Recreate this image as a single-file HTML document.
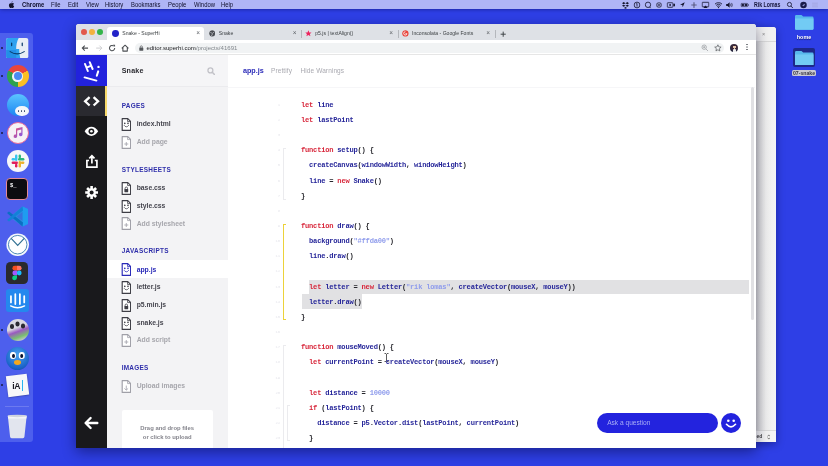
<!DOCTYPE html>
<html>
<head>
<meta charset="utf-8">
<title>Snake - SuperHi</title>
<style>
*{box-sizing:border-box;margin:0;padding:0}
html,body{width:828px;height:466px;overflow:hidden}
body{background:#2e3fe6;font-family:"Liberation Sans",sans-serif;position:relative;color:#222}
#root{position:absolute;left:0;top:0;width:828px;height:466px;will-change:transform}
.abs{position:absolute}
/* menubar */
#menubar{position:absolute;left:0;top:0;width:828px;height:9.200px;background:#afb5f6;box-shadow:0 0 4px rgba(0,0,60,.55);font-size:6.700px;line-height:10.500px;color:#0e0e2a;white-space:nowrap}
#menubar span{position:absolute;top:0;transform-origin:0 0;transform:scaleX(.88)}
#menubar b{font-weight:bold}
.mi{position:absolute;top:-.300px;height:10px;transform:scale(.900);transform-origin:50% 50%}
/* dock */
#dock{position:absolute;left:0;top:32.600px;width:32.900px;height:409px;background:#4d5fed;border-radius:0 3px 3px 0}
.di{position:absolute;left:7px;width:22px;height:22px;border-radius:50%}
.dot{position:absolute;left:1px;width:2px;height:2px;border-radius:50%;background:#1a1a40}
/* back window */
#backwin{position:absolute;left:700px;top:26.500px;width:75.900px;height:415.200px;background:#f3f3f3;border-radius:3px 3px 0 0;box-shadow:0 2px 9px rgba(0,0,40,.4);overflow:hidden}
#bwtab{position:absolute;left:0;top:0;width:76px;height:15px;background:#f1f1f1;border-bottom:1px solid #d8d8d8}
#bwx{position:absolute;left:62px;top:4.500px;font-size:5.500px;line-height:7px;color:#8a8a8a}
#bwbody{position:absolute;left:55px;top:15px;width:21px;height:392px;background:linear-gradient(90deg,#cecece 0,#e0e0e0 22%,#eeeeee 50%,#f4f4f4 100%)}
#bwfoot{position:absolute;left:55px;top:403.700px;width:21px;height:11.500px;background:#f4f4f4;border-top:1px solid #dadada}
#bwfoot span{position:absolute;left:1.500px;top:1.500px;font:bold 5px/7px "Liberation Sans",sans-serif;color:#444}
#bwfoot i{position:absolute;left:11.500px;top:2px;font:normal 5px/7px "Liberation Sans",sans-serif;color:#666}
/* main window */
#win{position:absolute;left:76.200px;top:24.100px;width:679.500px;height:423.700px;background:#fff;border-radius:3px 3px 0 0;box-shadow:0 4px 14px rgba(0,0,40,.45);overflow:hidden}
#tabbar{position:absolute;left:0;top:0;width:680px;height:16px;background:#dee1e6}
.tl{position:absolute;top:4.800px;width:5.800px;height:5.800px;border-radius:50%;margin-left:.700px}
#tab1{position:absolute;left:31px;top:2.800px;width:97px;height:13.200px;background:#fff;border-radius:3px 3px 0 0}
.tabt{position:absolute;top:6.200px;margin-left:.600px;font-size:5.100px;line-height:7px;color:#3c4043;white-space:nowrap}
.tabx{position:absolute;top:5.400px;margin-left:.600px;font-size:6.500px;line-height:8px;color:#5f6368}
.tsep{position:absolute;top:5.500px;margin-left:.600px;width:1px;height:8px;background:#b4b7bc}
.fav{position:absolute;top:5.900px;margin-left:.600px;width:6.800px;height:6.800px;border-radius:50%}
#toolbar{position:absolute;left:0;top:16px;width:680px;height:15.300px;background:#fff;border-bottom:1px solid #e6e6e6}
.nav{position:absolute;top:3.500px;width:8.200px;height:8.200px}
#url{position:absolute;left:58.500px;top:2.600px;width:589px;height:10.500px;border-radius:5.200px;background:#f1f3f4}
#urlt{position:absolute;left:70.200px;top:3px;font-size:6.070px;line-height:10px;color:#202124;white-space:nowrap}
#urlt i{font-style:normal;color:#80868b}
/* page */
#page{position:absolute;left:.800px;top:31.300px;width:678.700px;height:392.500px;background:#fff}
#page:before{content:"";position:absolute;left:-.800px;top:0;width:1.200px;height:100%;background:linear-gradient(#2222dd 0 31px,#2a2a30 31px 61px,#19191c 61px)}
#rail{position:absolute;left:0;top:0;width:29.800px;height:393px;overflow:hidden;background:#19191c}
#logo{position:absolute;left:0;top:0;width:30px;height:31px;background:#2222dd}
#railact{position:absolute;left:0;top:31px;width:30px;height:30px;background:#2a2a30}
#railbar{position:absolute;left:27.600px;top:31px;width:2.800px;height:30px;background:#f7d96a}
.ri{position:absolute;left:0;width:30px;height:30px}
#side{position:absolute;left:29.800px;top:0;width:121.200px;height:393px;background:#f3f3f5}
#side h4{position:absolute;left:14.900px;font-size:6.400px;line-height:8px;letter-spacing:.300px;color:#2e2eaa;font-weight:bold}
.f{position:absolute;left:0;width:121.700px;height:17.7px}
.f.on{background:#fff}
.f span{position:absolute;left:29.900px;top:4.3px;font-size:6.8px;line-height:9px;font-weight:bold;color:#46464f;white-space:nowrap}
.f.add span{color:#a6a6ac}
.f.on span{color:#2a2ab8}
.f svg{position:absolute;left:13.800px;top:3px;width:10.400px;height:13px}

#sidehead{position:absolute;left:0;top:0;width:121.300px;height:31.800px;border-bottom:1px solid #ebebee;background:#f5f5f7}
#sidehead span{position:absolute;left:14.900px;top:12px;font-size:7.1px;line-height:9px;font-weight:bold;color:#2a2a30;letter-spacing:.2px}
#sidehead svg{position:absolute;left:99.900px;top:11.5px;width:8.5px;height:8.5px}
#drop{position:absolute;left:14.900px;top:355px;width:91px;height:40px;background:#fff;border-radius:2px}
#drop span{position:absolute;left:0;top:14px;width:91px;text-align:center;font-size:5.900px;line-height:9px;color:#84848c;font-weight:bold}
#main{position:absolute;left:151px;top:0;width:527.700px;height:392px;background:#fff}
#edhead{position:absolute;left:0;top:0;width:527px;height:32.400px;border-bottom:1px solid #f6f6f8;background:#fff}
#edhead span{position:absolute;top:12px;font-size:6.4px;line-height:8px;white-space:nowrap}
#code{position:absolute;left:0;top:32px;width:522px;height:360px;font-family:"Liberation Mono",monospace;font-weight:bold;font-size:7.100px;letter-spacing:-.220px;color:#27279a}
.l{position:absolute;left:73px;height:15px;line-height:15px;white-space:pre;margin-top:.500px}
.n{position:absolute;left:44px;width:8px;height:15px;line-height:15px;margin-top:.500px;font-size:4px;color:#e6e6ec;text-align:right;font-weight:normal}
.k{color:#d8283c}
.s{color:#8f9cec}
.p{color:#26262c}
.sel{position:absolute;background:#e1e1e3}
.br{position:absolute;width:3px;border:1px solid #ebebee;border-right:none}
.br.y{border-color:#ecd23a;border-width:1.200px;border-right:none}
#sb{position:absolute;left:522.800px;top:0;width:3px;height:233px;background:#e0e0e3;border-radius:2px}
#ask{position:absolute;left:368.700px;top:358px;width:121.500px;height:19.600px;border-radius:10px;background:#2323de}
#ask span{position:absolute;left:10.500px;top:5.800px;font-size:6.600px;line-height:8px;color:#a9aef6;white-space:nowrap}
#askb{position:absolute;left:493.300px;top:358px;width:20px;height:20px;border-radius:50%;background:#2323de}

</style>
</head>
<body>
<div id="root">

<div id="menubar">
<span style="left:22px"><b>Chrome</b></span>
<span style="left:51px">File</span>
<span style="left:68px">Edit</span>
<span style="left:86px">View</span>
<span style="left:105px">History</span>
<span style="left:131px">Bookmarks</span>
<span style="left:168px">People</span>
<span style="left:194px">Window</span>
<span style="left:221px">Help</span>
<span style="left:753.800px;transform:scaleX(.780);font-weight:bold;color:#15153a">Rik Lomas</span>
<svg class="mi" style="left:7.500px;width:7px" viewBox="0 0 7 10"><path d="M4.800 1.200c-.1.700-.7 1.300-1.300 1.300-.1-.7.600-1.400 1.300-1.300zM3.500 3c.4 0 .8-.3 1.400-.3.500 0 1.100.3 1.400.8-1.200.7-1 2.500.2 2.900-.3.800-.9 1.900-1.600 1.900-.5 0-.7-.3-1.300-.3s-.8.300-1.300.3C1.500 8.300.6 6.600.6 5.300.6 3.800 1.600 3 2.400 3c.5 0 .8.300 1.100 0z" fill="#15152e"/></svg>
<svg class="mi" style="left:620.500px;width:9px" viewBox="0 0 9 10"><path d="M2.500 1.800L4.500 3l-2 1.200L.6 3zM6.500 1.800L8.400 3l-1.900 1.200L4.500 3zM2.500 4.600l2 1.200-2 1.200L.6 5.800zM6.500 4.600l1.900 1.200L6.500 7l-2-1.200zM4.500 7.200l1.700 1-1.700 1-1.700-1z" fill="#15152e"/></svg>
<svg class="mi" style="left:633px;width:8px" viewBox="0 0 8 10"><circle cx="4" cy="5" r="3.200" fill="none" stroke="#15152e" stroke-width=".9"/><path d="M4 3.200v3.600M3.200 3.800l.8-.6" stroke="#15152e" stroke-width=".9" fill="none"/></svg>
<svg class="mi" style="left:644px;width:8px" viewBox="0 0 8 10"><circle cx="4" cy="4.800" r="3" fill="none" stroke="#15152e" stroke-width=".9"/><path d="M5.800 7.200l1.200 1.300" stroke="#15152e" stroke-width=".9"/></svg>
<svg class="mi" style="left:655px;width:8px" viewBox="0 0 8 10"><circle cx="4" cy="5" r="3.100" fill="#4a4a6a"/><circle cx="4" cy="5" r="1.700" fill="none" stroke="#afb5f6" stroke-width=".7"/></svg>
<svg class="mi" style="left:665.500px;width:10px" viewBox="0 0 10 10"><rect x=".8" y="2.500" width="6.400" height="5" rx=".8" fill="none" stroke="#15152e" stroke-width=".9"/><path d="M7.600 4.300l1.800-1v3.400l-1.800-1z" fill="#15152e"/><circle cx="4" cy="5" r="1" fill="#15152e"/></svg>
<svg class="mi" style="left:679px;width:7px" viewBox="0 0 7 10"><path d="M6 2L.8 4.600l2.500.4.400 2.500z" fill="#15152e"/></svg>
<svg class="mi" style="left:690px;width:8px" viewBox="0 0 8 10"><path d="M1 5h6M4 3v4" stroke="#3a3a5a" stroke-width=".8"/><circle cx="4" cy="2.600" r=".6" fill="#3a3a5a"/><circle cx="4" cy="7.400" r=".6" fill="#3a3a5a"/></svg>
<svg class="mi" style="left:700.500px;width:9px" viewBox="0 0 9 10"><rect x=".8" y="2" width="7.400" height="5" rx=".6" fill="none" stroke="#15152e" stroke-width=".9"/><path d="M4.500 5.600l2.300 2.600H2.200z" fill="#15152e"/></svg>
<svg class="mi" style="left:713.500px;width:9px" viewBox="0 0 9 10"><path d="M.6 4a5.600 5.600 0 0 1 7.800 0M1.900 5.400a3.700 3.700 0 0 1 5.200 0M3.200 6.700a1.900 1.900 0 0 1 2.600 0" fill="none" stroke="#15152e" stroke-width="1"/><circle cx="4.500" cy="7.900" r=".7" fill="#15152e"/></svg>
<svg class="mi" style="left:725px;width:9px" viewBox="0 0 9 10"><path d="M.8 3.800h1.600L4.600 2v6L2.400 6.200H.8z" fill="#15152e"/><path d="M5.600 3.600q1 1.400 0 2.800M6.800 2.700q1.700 2.300 0 4.600" fill="none" stroke="#15152e" stroke-width=".7"/></svg>
<svg class="mi" style="left:740.300px;width:9.600px;height:8px;top:.600px" viewBox="0 0 12 10"><rect x=".6" y="2.800" width="9.600" height="4.400" rx="1" fill="none" stroke="#15152e" stroke-width=".8"/><rect x="1.500" y="3.700" width="3.300" height="2.600" fill="#15152e"/><rect x="5.800" y="3.700" width="3.400" height="2.600" fill="#15152e"/><rect x="10.600" y="4.200" width=".9" height="1.600" fill="#15152e"/></svg>
<svg class="mi" style="left:785.500px;width:8px" viewBox="0 0 8 10"><circle cx="3.400" cy="4.400" r="2.300" fill="none" stroke="#15152e" stroke-width=".9"/><path d="M5.100 6.200l2 2.100" stroke="#15152e" stroke-width="1"/></svg>
<svg class="mi" style="left:798.500px;width:9px" viewBox="0 0 9 10"><circle cx="4.500" cy="5" r="3.600" fill="#1a1a4a"/><path d="M2.800 5.600l3.400-2-1.400 3.200-.4-1.300z" fill="#afb5f6"/></svg>
<svg class="mi" style="left:811px;width:8px" viewBox="0 0 8 10"><path d="M.8 3h6.400M.8 5h6.400M.8 7h6.400" stroke="#a0a3dc" stroke-width=".8"/></svg>

</div>

<div id="dock">
<!-- coords: x, y-33 -->
<div class="dot" style="top:14.500px"></div>
<div class="dot" style="top:42.500px"></div>
<div class="dot" style="top:99px"></div>
<div class="dot" style="top:296.500px"></div>
<div class="dot" style="top:351px"></div>
<!-- finder -->
<svg class="abs" style="left:6.400px;top:5.300px;width:22.400px;height:20.200px" viewBox="0 0 22 20"><rect width="22" height="20" rx="2" fill="#e9eef5"/><path d="M0 2a2 2 0 0 1 2-2h10.500c-2 4-2.500 7-2.500 11h3c0 3 .3 6 1 9H2a2 2 0 0 1-2-2z" fill="#2ea2f0"/><path d="M0 12h10v8H2a2 2 0 0 1-2-2z" fill="#1c7fe0" opacity=".55"/><path d="M5.500 5v2.500M16 5v2.500" stroke="#0a3a6a" stroke-width="1.200" stroke-linecap="round"/><path d="M4 13.500q7 4.500 14 0" fill="none" stroke="#0a3a6a" stroke-width="1.100" stroke-linecap="round"/></svg>
<!-- chrome -->
<div class="abs" style="left:6.500px;top:32.500px;width:22px;height:22px;border-radius:50%;background:conic-gradient(from -60deg,#e8453c 0 120deg,#fbbf24 120deg 240deg,#2fa24f 240deg 360deg)"></div>
<div class="abs" style="left:12px;top:38px;width:11px;height:11px;border-radius:50%;background:#f2f4f8"></div>
<div class="abs" style="left:13.500px;top:39.500px;width:8px;height:8px;border-radius:50%;background:#4a8af4"></div>
<!-- messages -->
<div class="abs" style="left:6.500px;top:61px;width:22px;height:22px;border-radius:50%;background:linear-gradient(#5cc4ff,#1b86f2)"></div>
<div class="abs" style="left:14.500px;top:73px;width:14px;height:10.500px;border-radius:50%;background:#f4f6fa"></div>
<div class="abs" style="left:17.500px;top:77.300px;width:1.800px;height:1.800px;border-radius:50%;background:#3a4a6a;box-shadow:3px 0 0 #3a4a6a,6px 0 0 #3a4a6a"></div>
<!-- music -->
<div class="abs" style="left:6.500px;top:89px;width:22px;height:22px;border-radius:50%;background:#f6f2f6;border:1.500px solid #e86a9a"></div>
<svg class="abs" style="left:11.500px;top:93.500px;width:12px;height:13px" viewBox="0 0 12 13"><defs><linearGradient id="mg" x1="0" y1="0" x2="1" y2="1"><stop offset="0" stop-color="#f0506e"/><stop offset="1" stop-color="#7a5cf0"/></linearGradient></defs><path d="M4 2.500l6.500-1.500v7.500a1.800 1.800 0 1 1-1.200-1.700V3.500L5.200 4.400v5.900a1.800 1.800 0 1 1-1.200-1.700z" fill="url(#mg)"/></svg>
<!-- slack -->
<div class="abs" style="left:6.500px;top:117px;width:22px;height:22px;border-radius:50%;background:#f7f7f9"></div>
<svg class="abs" style="left:10.500px;top:121px;width:14px;height:14px" viewBox="0 0 14 14"><g stroke-width="2.400" stroke-linecap="round" fill="none"><path d="M5.200 1.800v4" stroke="#36c5f0"/><path d="M1.800 5.200h1.200" stroke="#36c5f0"/><path d="M8.800 8.200v4" stroke="#ecb22e"/><path d="M11 8.800h1.200" stroke="#ecb22e"/><path d="M8.200 5.200h4" stroke="#2eb67d"/><path d="M8.800 1.800v1.200" stroke="#2eb67d"/><path d="M1.800 8.800h4" stroke="#e01e5a"/><path d="M5.200 11v1.200" stroke="#e01e5a"/></g></svg>
<!-- terminal -->
<div class="abs" style="left:6.400px;top:145.600px;width:21.600px;height:21.600px;border-radius:4px;background:#0c0c10;border:1.600px solid #e48a96"></div>
<div class="abs" style="left:10px;top:150px;font:bold 5.500px/6px 'Liberation Mono',monospace;color:#fff">$_</div>
<!-- vscode -->
<svg class="abs" style="left:5.500px;top:172.500px;width:23px;height:23px" viewBox="0 0 23 23"><path d="M16.500 1.500L22 4v15l-5.500 2.500L4 12z" fill="#2a8fe0"/><path d="M16.500 1.500L22 4v15l-5.500 2.500z" fill="#1f9cf0"/><path d="M1 8l2-1.500 14 11-.5 4z" fill="#0a6fc4"/><path d="M1 15l2 1.500L17 5.500l-.5-4z" fill="#1480d8"/><path d="M16.500 7v9L10.500 11.500z" fill="#3f57e0" opacity=".55"/></svg>
<!-- clock / airmail -->
<svg class="abs" style="left:5.800px;top:200.300px;width:23.400px;height:23.400px" viewBox="0 0 24 24"><circle cx="12" cy="12" r="11.600" fill="#f4f8fc"/><circle cx="12" cy="12" r="9.500" fill="#fdfeff" stroke="#4a86b4" stroke-width="1"/><path d="M5.300 5.600l6.700 7 6.700-7" fill="none" stroke="#2f6f92" stroke-width="1.200"/></svg>
<!-- figma -->
<div class="abs" style="left:6.300px;top:229.400px;width:21.800px;height:22px;border-radius:4.500px;background:#2a2a2e"></div>
<svg class="abs" style="left:12.200px;top:232.400px;width:10px;height:16px" viewBox="0 0 10 16"><path d="M5 .8H2.800a2.400 2.400 0 0 0 0 4.800H5z" fill="#f24e1e"/><path d="M5 .8h2.200a2.400 2.400 0 0 1 0 4.800H5z" fill="#ff7262"/><path d="M5 5.600H2.800a2.400 2.400 0 0 0 0 4.800H5z" fill="#a259ff"/><circle cx="7.200" cy="8" r="2.400" fill="#1abcfe"/><path d="M5 10.400H2.800A2.400 2.400 0 1 0 5 12.800z" fill="#0acf83"/></svg>
<!-- intercom -->
<div class="abs" style="left:5.800px;top:256.200px;width:23.200px;height:22.800px;border-radius:3px;background:#2488ee"></div>
<svg class="abs" style="left:5.800px;top:256.200px;width:23.200px;height:22.800px" viewBox="0 0 22 22"><g stroke="#fff" stroke-width="1.700" stroke-linecap="round" fill="none"><path d="M4.600 7v6M8.800 5v9.500M13.200 5v9.500M17.400 7v6"/><path d="M4.300 16.300q6.700 3.600 13.400 0" stroke-width="1.400"/></g></svg>
<!-- photo slideshow -->
<div class="abs" style="left:6.500px;top:286px;width:22px;height:22px;border-radius:50%;background:linear-gradient(160deg,#d8d8e0 0 40%,#9a5ac0 55%,#7ac070 75%,#c8c8d0 90%)"></div>
<div class="abs" style="left:9.500px;top:291.500px;width:4.500px;height:4.500px;border-radius:50%;background:#2a2a30;box-shadow:5.500px -2.500px 0 #2a2a30,11px -.5px 0 #2a2a30"></div>
<!-- tweetbot -->
<div class="abs" style="left:6px;top:314px;width:23px;height:23px;border-radius:50%;background:radial-gradient(circle at 50% 35%,#4aa4f0,#1a62c8 70%,#123c8a 100%)"></div>
<div class="abs" style="left:10.300px;top:319.500px;width:5.400px;height:6.600px;border-radius:50%;background:#fff;box-shadow:8.800px 0 0 #fff"></div>
<div class="abs" style="left:12px;top:321.300px;width:2.800px;height:3.800px;border-radius:50%;background:#0a1430;box-shadow:8.200px 0 0 #0a1430"></div>
<div class="abs" style="left:14px;top:327.200px;width:7px;height:4.800px;border-radius:50%;background:#f6a81c"></div>
<!-- iA writer -->
<div class="abs" style="left:7px;top:342.500px;width:20.500px;height:20.500px;background:#f7f7f9;transform:rotate(-7deg);box-shadow:0 .5px 1.500px rgba(0,0,40,.4)"></div>
<div class="abs" style="left:12.200px;top:348px;font:bold 8.600px/10px 'Liberation Sans',sans-serif;color:#1a1a22;letter-spacing:-.300px">iA</div>
<div class="abs" style="left:21.800px;top:347.600px;width:1.500px;height:10.500px;background:#28b4f0"></div>
<!-- separator -->
<div class="abs" style="left:5px;top:373.200px;width:24px;height:1px;background:#6c7af0"></div>
<!-- trash -->
<svg class="abs" style="left:7px;top:381.400px;width:20.500px;height:25.200px" viewBox="0 0 20 24"><path d="M.8 1.500h18.400L17 22a1.500 1.500 0 0 1-1.500 1.300h-11A1.500 1.500 0 0 1 3 22z" fill="#e2e5ee"/><path d="M.8 1.500h18.400l-.3 2.500H1.100z" fill="#f4f5f9"/><ellipse cx="10" cy="1.600" rx="9.200" ry="1.200" fill="#d0d4de"/></svg>
</div>

<div id="desk">
<svg class="abs" style="left:795px;top:14.8px;width:18.500px;height:14.800px" viewBox="0 0 18.500 14.800"><path d="M0 1.200A1.200 1.200 0 0 1 1.200 0h5.300l1.700 1.600h9.100a1.200 1.200 0 0 1 1.200 1.200v10.800a1.200 1.200 0 0 1-1.200 1.200H1.200A1.200 1.200 0 0 1 0 13.600z" fill="#58b8ec"/><path d="M0 3.600h18.500v10a1.200 1.200 0 0 1-1.200 1.200H1.200A1.200 1.200 0 0 1 0 13.600z" fill="#72cbf4"/></svg>
<div class="abs" style="left:790px;top:33.800px;width:28px;text-align:center;font:bold 5.400px/7px 'Liberation Sans',sans-serif;color:#fff;text-shadow:0 .5px 1px rgba(0,0,40,.6)">home</div>
<div class="abs" style="left:793.300px;top:47.800px;width:21.600px;height:19.600px;border-radius:2px;background:#1a2478;opacity:.85"></div>
<svg class="abs" style="left:795.2px;top:50.6px;width:18.500px;height:14.800px" viewBox="0 0 18.500 14.800"><path d="M0 1.200A1.200 1.200 0 0 1 1.200 0h5.300l1.700 1.600h9.100a1.200 1.200 0 0 1 1.200 1.200v10.800a1.200 1.200 0 0 1-1.200 1.200H1.200A1.200 1.200 0 0 1 0 13.600z" fill="#58b8ec"/><path d="M0 3.600h18.500v10a1.200 1.200 0 0 1-1.200 1.200H1.200A1.200 1.200 0 0 1 0 13.600z" fill="#72cbf4"/></svg>
<div class="abs" style="left:792px;top:70.400px;width:24px;height:5.800px;border-radius:1.500px;background:#c9cad2"></div>
<div class="abs" style="left:790px;top:69.800px;width:28px;text-align:center;font:bold 5.200px/7px 'Liberation Sans',sans-serif;color:#3a3a46">07-snake</div>
</div>
<div id="backwin"><div id="bwtab"></div><div id="bwx">×</div><div id="bwbody"></div><div id="bwfoot"><span>ed</span><svg class="abs" style="left:11.800px;top:2.800px;width:3.600px;height:6px" viewBox="0 0 6 10"><path d="M1 4l2-2.500L5 4M1 6l2 2.500L5 6" fill="none" stroke="#555" stroke-width="1.200"/></svg></div></div>

<div id="win">
  <div id="tabbar">
    <div class="tl" style="left:4px;background:#e2594c"></div>
    <div class="tl" style="left:12px;background:#f3b23e"></div>
    <div class="tl" style="left:20px;background:#34b549"></div>
    <div id="tab1"></div>
    <div class="fav" style="left:35.300px;background:#2323c8"></div>
    <div class="tabt" style="left:45.500px">Snake - SuperHi</div>
    <div class="tabx" style="left:119.500px">×</div>
    <svg class="fav" style="left:131.800px" viewBox="0 0 10 10"><circle cx="5" cy="5" r="4.600" fill="#4a4d52"/><path d="M2 3.500c1.500 0 1.500 1.500 3 1.500s1-2 2.500-2M3.500 9c0-1.500 1.500-1.500 1.500-3" stroke="#dee1e6" stroke-width="1" fill="none"/></svg>
    <div class="tabt" style="left:142px">Snake</div>
    <div class="tabx" style="left:216px">×</div>
    <div class="tsep" style="left:224.500px"></div>
    <svg class="fav" style="left:228.600px" viewBox="0 0 10 10"><path d="M5 .3l1.300 3.200 3.400.2-2.600 2.200.9 3.400L5 7.400 2 9.300l.9-3.400L.3 3.700l3.400-.2z" fill="#ec245e"/></svg>
    <div class="tabt" style="left:238.500px">p5.js | textAlign()</div>
    <div class="tabx" style="left:312.500px">×</div>
    <div class="tsep" style="left:320.800px"></div>
    <svg class="fav" style="left:325.200px" viewBox="0 0 10 10"><circle cx="5" cy="5" r="4.700" fill="#e8453c"/><path d="M5 2.500a2.500 2.500 0 1 0 2.400 3H5" stroke="#fff" stroke-width="1.200" fill="none"/></svg>
    <div class="tabt" style="left:335.300px">Inconsolata - Google Fonts</div>
    <div class="tabx" style="left:409.500px">×</div>
    <div class="tsep" style="left:418.200px"></div>
    <svg class="abs" style="left:423.400px;top:6.600px;width:6.400px;height:6.400px" viewBox="0 0 10 10"><path d="M5 1v8M1 5h8" stroke="#3c4043" stroke-width="1.500"/></svg>
  </div>
  <div id="toolbar">
    <svg class="nav" style="left:5.200px" viewBox="0 0 10 10"><path d="M8.600 5H1.800M4.600 2L1.600 5l3 3" fill="none" stroke="#4c4f53" stroke-width="1.300"/></svg>
    <svg class="nav" style="left:18.400px" viewBox="0 0 10 10"><path d="M1.400 5h6.800M5.400 2l3 3-3 3" fill="none" stroke="#c9cbce" stroke-width="1.100"/></svg>
    <svg class="nav" style="left:31.700px" viewBox="0 0 10 10"><path d="M8.200 5A3.200 3.200 0 1 1 7 2.500" fill="none" stroke="#4c4f53" stroke-width="1.300"/><path d="M5.800 .8h2.800v2.800z" fill="#55585c"/></svg>
    <svg class="nav" style="left:44.500px" viewBox="0 0 10 10"><path d="M.900 5.300L5 1.500l4.100 3.800M2.300 4.400v4.300h5.400V4.400" fill="none" stroke="#4c4f53" stroke-width="1.300" stroke-linejoin="round"/></svg>
    <div id="url"></div>
    <svg class="abs" style="left:62.800px;top:5px;width:4.600px;height:6px" viewBox="0 0 8 10"><rect x=".5" y="4.200" width="7" height="5.500" rx=".8" fill="#55585c"/><path d="M2.200 4.500V3a1.800 1.800 0 0 1 3.600 0v1.500" fill="none" stroke="#55585c" stroke-width="1.200"/></svg>
    <div id="urlt">editor.superhi.com<i>/projects/41691</i></div>
    <svg class="nav" style="left:624.400px;top:4.200px;width:7.600px;height:7.600px" viewBox="0 0 10 10"><circle cx="4.200" cy="4.200" r="2.900" fill="none" stroke="#9a9da1" stroke-width="1"/><path d="M6.400 6.400l2.800 2.800M2.800 4.200h2.800M4.200 2.800v2.800" stroke="#9a9da1" stroke-width="1" fill="none"/></svg>
    <svg class="nav" style="left:638px;top:4px;width:7.800px;height:7.800px" viewBox="0 0 10 10"><path d="M5 1l1.200 2.700 2.900.3-2.200 2 .6 2.900L5 7.400 2.500 8.900l.6-2.900-2.200-2 2.900-.3z" fill="none" stroke="#55585c" stroke-width=".9" stroke-linejoin="round"/></svg>
    <div class="abs" style="left:653.600px;top:3.600px;width:8.400px;height:8.400px;border-radius:50%;background:radial-gradient(circle at 55% 40%,#e8c8b0 0 22%,#3a2a3a 24% 55%,#26263e 56%);"></div>
    <div class="abs" style="left:656.800px;top:8.800px;width:3px;height:3.200px;background:#f0f0f0;border-radius:1px 1px 0 0"></div>
    <div class="abs" style="left:670.300px;top:4.300px;width:1.100px;height:1.100px;border-radius:50%;background:#6a6e73;box-shadow:0 2.500px 0 #6a6e73,0 5px 0 #6a6e73"></div>
  </div>
  <div id="page">
    <div id="rail">
      <div id="logo"><svg viewBox="0 0 30 31" width="30" height="31" style="position:absolute;left:-1.100px;top:-1.700px"><g fill="none" stroke="#fff" stroke-width="2" stroke-linecap="round"><path d="M9 10l2.800 7M13.700 8.200l2.900 6.800M10.600 13.700l4.600-2"/><path d="M22.200 17.400l-1.400 4.300"/><path d="M8.600 23.400l11.800 3.200"/></g><circle cx="22.500" cy="12.900" r="1.200" fill="#fff"/></svg></div>
      <div id="railact"></div>
      <svg class="ri" style="top:31px" viewBox="0 0 30 30"><path d="M12.6 11.1L8.100 15.300l4.500 4.200M16.600 11.100l4.500 4.200-4.500 4.200" fill="none" stroke="#fff" stroke-width="2.300"/></svg>
      <svg class="ri" style="top:61px" viewBox="0 0 30 30"><path d="M7.6 15.3c2-3.3 4.4-4.6 6.8-4.6s4.800 1.300 6.800 4.600c-2 3.300-4.400 4.600-6.800 4.600s-4.800-1.300-6.800-4.600z" fill="#fff"/><circle cx="14.400" cy="15.300" r="2.900" fill="#19191c"/><circle cx="14.400" cy="15.300" r="1.300" fill="#fff"/></svg>
      <svg class="ri" style="top:91px" viewBox="0 0 30 30"><path d="M12 14.500H9.900v6.600h10v-6.600H17.800" fill="none" stroke="#fff" stroke-width="1.700"/><path d="M14.900 17.500V10.200M12.300 12.400l2.600-2.600 2.600 2.600" fill="none" stroke="#fff" stroke-width="1.700"/></svg>
      <svg class="ri" style="top:122px" viewBox="0 0 30 30"><g transform="translate(14.600 15.500)"><g stroke="#fff" stroke-width="2.600"><path d="M0-6.400V6.400M-6.400 0H6.400M-4.500-4.500L4.500 4.500M-4.500 4.500L4.500-4.500"/></g><circle r="4.300" fill="#fff"/><circle r="2" fill="#19191c"/></g></svg>
      <svg class="ri" style="top:353px" viewBox="0 0 30 30"><path d="M20.300 15H9.200M13.600 10L8.600 15l5 5" fill="none" stroke="#fff" stroke-width="2.400" stroke-linecap="round" stroke-linejoin="round"/></svg>
    </div>
    <div id="side">
<div id="sidehead"><span>Snake</span><svg viewBox="0 0 10 10"><circle cx="4" cy="4" r="2.9" fill="none" stroke="#c2c2c8" stroke-width="1.500"/><path d="M6.2 6.2l2.8 2.8" stroke="#c2c2c8" stroke-width="1.800" stroke-linecap="round"/></svg></div>
<h4 style="top:46.8px">PAGES</h4>
<div class="f" style="top:59.8px"><svg viewBox="0 0 10 13"><path d="M1 .6h5.6L9.4 3.4v9H1z" fill="#fff" stroke="#3e3e46" stroke-width="1.150" stroke-linejoin="round"/><path d="M6.4 .8v2.8h2.8" fill="none" stroke="#3e3e46" stroke-width=".8"/><circle cx="3.600" cy="5.400" r=".800" fill="#3e3e46"/><circle cx="6.800" cy="5.400" r=".800" fill="#3e3e46"/><path d="M3 7.500q2.200 2.900 4.400 0" fill="none" stroke="#3e3e46" stroke-width=".8" stroke-linecap="round"/></svg><span>index.html</span></div>
<div class="f add" style="top:77.4px"><svg viewBox="0 0 10 13"><path d="M1 .6h5.6L9.4 3.4v9H1z" fill="#fff" stroke="#a0a0a8" stroke-width="1.150" stroke-linejoin="round"/><path d="M6.4 .8v2.8h2.8" fill="none" stroke="#a0a0a8" stroke-width=".8"/><path d="M5.1 6v4M3.1 8h4" stroke="#a0a0a8" stroke-width=".8" fill="none"/></svg><span>Add page</span></div>
<h4 style="top:111.0px">STYLESHEETS</h4>
<div class="f" style="top:123.8px"><svg viewBox="0 0 10 13"><path d="M1 .6h5.6L9.4 3.4v9H1z" fill="#fff" stroke="#3e3e46" stroke-width="1.150" stroke-linejoin="round"/><path d="M6.4 .8v2.8h2.8" fill="none" stroke="#3e3e46" stroke-width=".8"/><rect x="3.2" y="7" width="3.8" height="3.2" rx=".4" fill="#3e3e46"/><path d="M3.9 7.2v-1a1.2 1.2 0 0 1 2.4 0v1" fill="none" stroke="#3e3e46" stroke-width=".8"/></svg><span>base.css</span></div>
<div class="f" style="top:141.4px"><svg viewBox="0 0 10 13"><path d="M1 .6h5.6L9.4 3.4v9H1z" fill="#fff" stroke="#3e3e46" stroke-width="1.150" stroke-linejoin="round"/><path d="M6.4 .8v2.8h2.8" fill="none" stroke="#3e3e46" stroke-width=".8"/><circle cx="3.600" cy="5.400" r=".800" fill="#3e3e46"/><circle cx="6.800" cy="5.400" r=".800" fill="#3e3e46"/><path d="M3 7.500q2.200 2.900 4.400 0" fill="none" stroke="#3e3e46" stroke-width=".8" stroke-linecap="round"/></svg><span>style.css</span></div>
<div class="f add" style="top:159.0px"><svg viewBox="0 0 10 13"><path d="M1 .6h5.6L9.4 3.4v9H1z" fill="#fff" stroke="#a0a0a8" stroke-width="1.150" stroke-linejoin="round"/><path d="M6.4 .8v2.8h2.8" fill="none" stroke="#a0a0a8" stroke-width=".8"/><path d="M5.1 6v4M3.1 8h4" stroke="#a0a0a8" stroke-width=".8" fill="none"/></svg><span>Add stylesheet</span></div>
<h4 style="top:192.0px">JAVASCRIPTS</h4>
<div class="f on" style="top:205.0px"><svg viewBox="0 0 10 13"><path d="M1 .6h5.6L9.4 3.4v9H1z" fill="#fff" stroke="#2a2ab8" stroke-width="1.150" stroke-linejoin="round"/><path d="M6.4 .8v2.8h2.8" fill="none" stroke="#2a2ab8" stroke-width=".8"/><circle cx="3.600" cy="5.400" r=".800" fill="#2a2ab8"/><circle cx="6.800" cy="5.400" r=".800" fill="#2a2ab8"/><path d="M3 7.500q2.200 2.900 4.400 0" fill="none" stroke="#2a2ab8" stroke-width=".8" stroke-linecap="round"/></svg><span>app.js</span></div>
<div class="f" style="top:222.7px"><svg viewBox="0 0 10 13"><path d="M1 .6h5.6L9.4 3.4v9H1z" fill="#fff" stroke="#3e3e46" stroke-width="1.150" stroke-linejoin="round"/><path d="M6.4 .8v2.8h2.8" fill="none" stroke="#3e3e46" stroke-width=".8"/><circle cx="3.600" cy="5.400" r=".800" fill="#3e3e46"/><circle cx="6.800" cy="5.400" r=".800" fill="#3e3e46"/><path d="M3 7.500q2.200 2.900 4.400 0" fill="none" stroke="#3e3e46" stroke-width=".8" stroke-linecap="round"/></svg><span>letter.js</span></div>
<div class="f" style="top:240.4px"><svg viewBox="0 0 10 13"><path d="M1 .6h5.6L9.4 3.4v9H1z" fill="#fff" stroke="#3e3e46" stroke-width="1.150" stroke-linejoin="round"/><path d="M6.4 .8v2.8h2.8" fill="none" stroke="#3e3e46" stroke-width=".8"/><rect x="3.2" y="7" width="3.8" height="3.2" rx=".4" fill="#3e3e46"/><path d="M3.9 7.2v-1a1.2 1.2 0 0 1 2.4 0v1" fill="none" stroke="#3e3e46" stroke-width=".8"/></svg><span>p5.min.js</span></div>
<div class="f" style="top:258.2px"><svg viewBox="0 0 10 13"><path d="M1 .6h5.6L9.4 3.4v9H1z" fill="#fff" stroke="#3e3e46" stroke-width="1.150" stroke-linejoin="round"/><path d="M6.4 .8v2.8h2.8" fill="none" stroke="#3e3e46" stroke-width=".8"/><circle cx="3.600" cy="5.400" r=".800" fill="#3e3e46"/><circle cx="6.800" cy="5.400" r=".800" fill="#3e3e46"/><path d="M3 7.500q2.200 2.900 4.400 0" fill="none" stroke="#3e3e46" stroke-width=".8" stroke-linecap="round"/></svg><span>snake.js</span></div>
<div class="f add" style="top:275.8px"><svg viewBox="0 0 10 13"><path d="M1 .6h5.6L9.4 3.4v9H1z" fill="#fff" stroke="#a0a0a8" stroke-width="1.150" stroke-linejoin="round"/><path d="M6.4 .8v2.8h2.8" fill="none" stroke="#a0a0a8" stroke-width=".8"/><path d="M5.1 6v4M3.1 8h4" stroke="#a0a0a8" stroke-width=".8" fill="none"/></svg><span>Add script</span></div>
<h4 style="top:308.6px">IMAGES</h4>
<div class="f add" style="top:321.4px"><svg viewBox="0 0 10 13"><path d="M1 .6h5.6L9.4 3.4v9H1z" fill="#fff" stroke="#a0a0a8" stroke-width="1.150" stroke-linejoin="round"/><path d="M6.4 .8v2.8h2.8" fill="none" stroke="#a0a0a8" stroke-width=".8"/><path d="M5.100 5.600v4.400M3.300 8.400l1.800 1.800 1.800-1.800" stroke="#a0a0a8" stroke-width=".8" fill="none"/></svg><span>Upload images</span></div>
<div id="drop"><span>Drag and drop files<br>or click to upload</span></div>
</div>
    <div id="railbar"></div>
    <div id="main">
      <div id="edhead">
        <span style="left:15px;color:#2a2ab8;font-weight:bold;font-size:7.200px">app.js</span>
        <span style="left:43px;color:#a9a9b0;font-size:6.500px;letter-spacing:.100px">Prettify</span>
        <span style="left:72.500px;color:#a9a9b0;font-size:6.500px;letter-spacing:.100px">Hide Warnings</span>
      </div>
      <div id="code">

<div class="br" style="left:55.300px;top:61px;height:51.500px"></div>
<div class="br y" style="left:54.600px;top:136.300px;height:96px"></div>
<div class="br" style="left:55.300px;top:257.500px;height:110px;border-bottom:none"></div>
<div class="br" style="left:58.600px;top:318px;height:36px"></div>
<div id="sb"></div>
<svg class="abs" style="left:155.800px;top:265.700px;width:5px;height:9px" viewBox="0 0 5 9"><path d="M.5 .5h1.500M3 .5h1.500M.5 8.500h1.500M3 8.500h1.500M2.500 .8v7.400" stroke="#333" stroke-width=".8" fill="none"/></svg>
<div class="sel" style="left:81.500px;top:192.200px;width:439.500px;height:14.800px"></div>
<div class="sel" style="left:74px;top:207px;width:60px;height:15px"></div>
<div class="n" style="top:9.80px">1</div>
<div class="l" style="top:9.80px"><span class="k">let</span> line</div>
<div class="n" style="top:24.96px">2</div>
<div class="l" style="top:24.96px"><span class="k">let</span> lastPoint</div>
<div class="n" style="top:40.13px">3</div>
<div class="n" style="top:55.29px">4</div>
<div class="l" style="top:55.29px"><span class="k">function</span> setup<span class="p">() {</span></div>
<div class="n" style="top:70.45px">5</div>
<div class="l" style="top:70.45px">  createCanvas<span class="p">(</span>windowWidth<span class="p">,</span> windowHeight<span class="p">)</span></div>
<div class="n" style="top:85.62px">6</div>
<div class="l" style="top:85.62px">  line <span class="p">=</span> <span class="k">new</span> Snake<span class="p">()</span></div>
<div class="n" style="top:100.78px">7</div>
<div class="l" style="top:100.78px"><span class="p">}</span></div>
<div class="n" style="top:115.94px">8</div>
<div class="n" style="top:131.10px">9</div>
<div class="l" style="top:131.10px"><span class="k">function</span> draw<span class="p">() {</span></div>
<div class="n" style="top:146.27px">10</div>
<div class="l" style="top:146.27px">  background<span class="p">(</span><span class="s">"#ffda00"</span><span class="p">)</span></div>
<div class="n" style="top:161.43px">11</div>
<div class="l" style="top:161.43px">  line<span class="p">.</span>draw<span class="p">()</span></div>
<div class="n" style="top:176.59px">12</div>
<div class="n" style="top:191.76px">13</div>
<div class="l" style="top:191.76px">  <span class="k">let</span> letter <span class="p">=</span> <span class="k">new</span> Letter<span class="p">(</span><span class="s">"rik lomas"</span><span class="p">,</span> createVector<span class="p">(</span>mouseX<span class="p">,</span> mouseY<span class="p">))</span></div>
<div class="n" style="top:206.92px">14</div>
<div class="l" style="top:206.92px">  letter<span class="p">.</span>draw<span class="p">()</span></div>
<div class="n" style="top:222.08px">15</div>
<div class="l" style="top:222.08px"><span class="p">}</span></div>
<div class="n" style="top:237.25px">16</div>
<div class="n" style="top:252.41px">17</div>
<div class="l" style="top:252.41px"><span class="k">function</span> mouseMoved<span class="p">() {</span></div>
<div class="n" style="top:267.57px">18</div>
<div class="l" style="top:267.57px">  <span class="k">let</span> currentPoint <span class="p">=</span> createVector<span class="p">(</span>mouseX<span class="p">,</span> mouseY<span class="p">)</span></div>
<div class="n" style="top:282.73px">19</div>
<div class="n" style="top:297.90px">20</div>
<div class="l" style="top:297.90px">  <span class="k">let</span> distance <span class="p">=</span> <span class="s">10000</span></div>
<div class="n" style="top:313.06px">21</div>
<div class="l" style="top:313.06px">  <span class="k">if</span> <span class="p">(</span>lastPoint<span class="p">) {</span></div>
<div class="n" style="top:328.22px">22</div>
<div class="l" style="top:328.22px">    distance <span class="p">=</span> p5<span class="p">.</span>Vector<span class="p">.</span>dist<span class="p">(</span>lastPoint<span class="p">,</span> currentPoint<span class="p">)</span></div>
<div class="n" style="top:343.39px">23</div>
<div class="l" style="top:343.39px">  <span class="p">}</span></div>
</div>
      <div id="ask"><span>Ask a question</span></div>
      <div id="askb"><svg viewBox="0 0 20 20" width="20" height="20"><circle cx="7.300" cy="7.700" r="1.300" fill="#fff"/><circle cx="12.700" cy="7.700" r="1.300" fill="#fff"/><path d="M5.500 11.300q4.500 5 9 0" fill="none" stroke="#fff" stroke-width="1.700" stroke-linecap="round"/></svg></div>
    </div>
  </div>
</div>


</div>
</body>
</html>
